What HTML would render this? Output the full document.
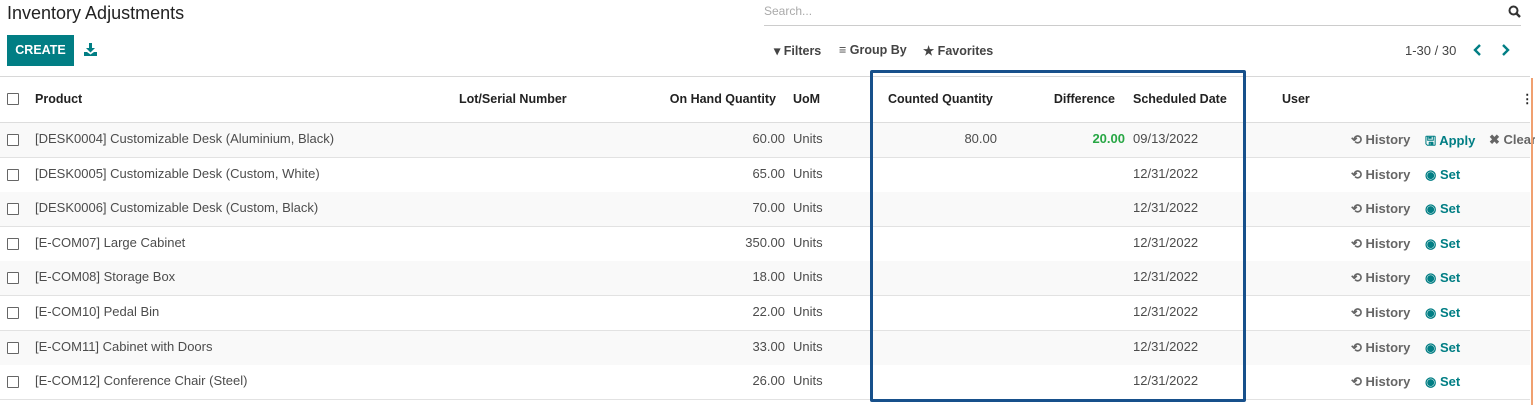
<!DOCTYPE html>
<html><head><meta charset="utf-8"><style>
*{box-sizing:border-box;margin:0;padding:0}
body{width:1535px;height:405px;overflow:hidden;background:#fff;font-family:"Liberation Sans",Roboto,sans-serif;font-size:13px;color:#4c4c4c;position:relative}
.abs{position:absolute;white-space:nowrap}
.title{left:7px;top:3px;font-size:18px;color:#222}
.create{left:7px;top:35px;width:67px;height:31px;background:#017e84;color:#fff;font-size:12.5px;font-weight:bold;line-height:31px;text-align:center}
.search{left:764px;top:0;width:757px;height:26px;border-bottom:1px solid #ccc;color:#aaa;font-size:12px;line-height:22px}
.hb{font-weight:bold;color:#222;font-size:12.5px}
.row{position:absolute;left:0;width:1530px;border-bottom:1px solid #e2e2e2}
.cb{position:absolute;left:7px;width:12px;height:12px;border:1px solid #666;border-radius:1px;background:#fff}
.t{position:absolute;white-space:nowrap}
.r{text-align:right}
.teal{color:#017e84;font-weight:bold}
.hist{color:#666;font-weight:bold}
.tb{font-weight:bold;color:#444;font-size:12.5px}
</style></head><body>
<div class="abs title">Inventory Adjustments</div>
<div class="abs create">CREATE</div>
<svg class="abs" style="left:84px;top:43px" width="13" height="13" viewBox="0 0 13 13"><path d="M5 0h3v5h3l-4.5 4.5L2 5h3z" fill="#017e84"/><path d="M0 9h3l3.5 2.5L10 9h3v4H0z" fill="#017e84"/></svg>
<div class="abs search">Search...</div>
<svg class="abs" style="left:1508px;top:5px" width="13" height="13" viewBox="0 0 13 13"><circle cx="5.5" cy="5.5" r="4" stroke="#333" stroke-width="2" fill="none"/><path d="M8.5 8.5l3.5 3.5" stroke="#333" stroke-width="2.4"/></svg>
<div class="abs tb" style="left:774px;top:43px">▾ Filters</div>
<div class="abs tb" style="left:839px;top:43px">≡ Group By</div>
<div class="abs tb" style="left:923px;top:43px">★ Favorites</div>
<div class="abs" style="left:1405px;top:43px;color:#444">1-30 / 30</div>
<svg class="abs" style="left:1473px;top:44px" width="10" height="12" viewBox="0 0 10 12"><path d="M7 1L2 6l5 5" stroke="#017e84" stroke-width="2.4" fill="none"/></svg>
<svg class="abs" style="left:1500px;top:44px" width="10" height="12" viewBox="0 0 10 12"><path d="M3 1l5 5-5 5" stroke="#017e84" stroke-width="2.4" fill="none"/></svg>
<div class="abs" style="left:0;top:76px;width:1530px;border-top:1px solid #d8d8d8"></div>
<div class="row" style="top:77px;height:46px;border-bottom-color:#ddd">
<div class="cb" style="top:16px"></div>
<div class="t hb" style="left:35px;top:15px">Product</div>
<div class="t hb" style="left:459px;top:15px">Lot/Serial Number</div>
<div class="t hb r" style="left:600px;width:176px;top:15px">On Hand Quantity</div>
<div class="t hb" style="left:793px;top:15px">UoM</div>
<div class="t hb" style="left:888px;top:15px">Counted Quantity</div>
<div class="t hb r" style="left:1000px;width:115px;top:15px">Difference</div>
<div class="t hb" style="left:1133px;top:15px">Scheduled Date</div>
<div class="t hb" style="left:1282px;top:15px">User</div>
<div class="t hb" style="left:1521px;top:14px">⋮</div>
</div>
<div id="rows"></div>
<div class="abs" style="left:1531px;top:78px;width:2px;height:327px;background:#f0a070"></div>
<div class="abs" style="left:870px;top:70px;width:376px;height:332px;border:3px solid #17508b;border-radius:2px"></div>
<script>
var d=[["[DESK0004] Customizable Desk (Aluminium, Black)","60.00","09/13/2022",1],
["[DESK0005] Customizable Desk (Custom, White)","65.00","12/31/2022"],
["[DESK0006] Customizable Desk (Custom, Black)","70.00","12/31/2022"],
["[E-COM07] Large Cabinet","350.00","12/31/2022"],
["[E-COM08] Storage Box","18.00","12/31/2022"],
["[E-COM10] Pedal Bin","22.00","12/31/2022"],
["[E-COM11] Cabinet with Doors","33.00","12/31/2022"],
["[E-COM12] Conference Chair (Steel)","26.00","12/31/2022"]];
var h="";
d.forEach(function(r,i){var top=Math.round(123+i*34.6);var bg=i%2==0?"#f9f9f9":"#fff";
h+='<div class="row" style="top:'+top+'px;height:35px;background:'+bg+'">'+
'<div class="cb" style="top:11px"></div>'+
'<div class="t" style="left:35px;top:8px">'+r[0]+'</div>'+
'<div class="t r" style="left:680px;width:105px;top:8px">'+r[1]+'</div>'+
'<div class="t" style="left:793px;top:8px">Units</div>'+
(r[3]?'<div class="t r" style="left:900px;width:97px;top:8px">80.00</div><div class="t r" style="left:1030px;width:95px;top:8px;color:#28a745;font-weight:bold">20.00</div>':'')+
'<div class="t" style="left:1133px;top:8px">'+r[2]+'</div>'+
'<div class="t hist" style="left:1351px;top:9px">⟲ History</div>'+
(r[3]?'<div class="t teal" style="left:1425px;top:9px">🖫 Apply</div><div class="t hist" style="left:1489px;top:9px">✖ Clear</div>':'<div class="t teal" style="left:1425px;top:9px">◉ Set</div>')+
'</div>';});
document.getElementById("rows").innerHTML=h;
</script>
</body></html>
